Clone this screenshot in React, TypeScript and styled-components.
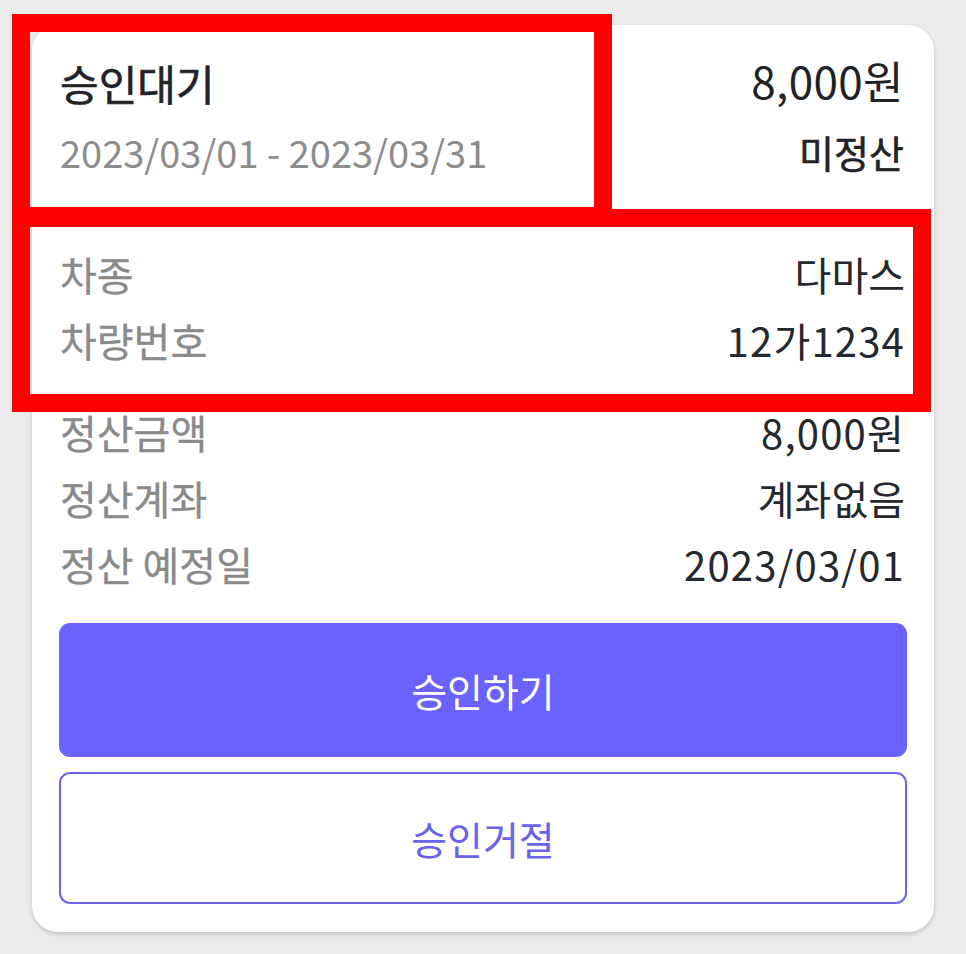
import React from 'react';
import styled, { createGlobalStyle } from 'styled-components';

const GlobalStyle = createGlobalStyle`
  html, body {
    margin: 0;
    padding: 0;
    background: #ebebeb;
  }
  body {
    font-family: "Noto Sans CJK KR", "Noto Sans", sans-serif;
  }
`;

const Page = styled.div`
  position: relative;
  width: 966px;
  height: 954px;
  padding: 25px 0 0 32px;
  box-sizing: border-box;
`;

const Card = styled.div`
  width: 902px;
  height: 907px;
  box-sizing: border-box;
  padding: 28px 27px 28px;
  background: #ffffff;
  border-radius: 26px;
  box-shadow: 0 2px 4px rgba(0, 0, 0, 0.18);
  display: flex;
  flex-direction: column;
`;

const Header = styled.div`
  display: flex;
  justify-content: space-between;
  align-items: flex-start;
  padding: 0 3px 0 1px;
`;

const HeaderCol = styled.div<{ $align: 'left' | 'right' }>`
  display: flex;
  flex-direction: column;
  align-items: ${p => (p.$align === 'right' ? 'flex-end' : 'flex-start')};
`;

const Status = styled.div`
  font-size: 42px;
  line-height: 60px;
  font-weight: 400;
  -webkit-text-stroke: 0.6px currentColor;
  color: #1f2226;
`;

const Period = styled.div`
  font-size: 38px;
  line-height: 77px;
  color: #8c8c8c;
`;

const Amount = styled.div`
  font-size: 44px;
  line-height: 54px;
  letter-spacing: 0.4px;
  color: #1f2226;
`;

const Settle = styled.div`
  font-size: 38px;
  line-height: 89px;
  font-weight: 400;
  -webkit-text-stroke: 0.6px currentColor;
  color: #1f2226;
`;

const Group = styled.div<{ $top: number }>`
  display: flex;
  flex-direction: column;
  margin-top: ${p => p.$top}px;
  padding: 0 2px 0 1px;
`;

const Row = styled.div`
  display: flex;
  justify-content: space-between;
  height: 66px;
  font-size: 40px;
  line-height: 66px;
`;

const Label = styled.span`
  color: #8a8a8a;
  -webkit-text-stroke: 0.3px currentColor;
`;

const Value = styled.span<{ $numeric?: boolean }>`
  color: #25282c;
  letter-spacing: ${p => (p.$numeric ? '1.2px' : '0')};
`;

const Actions = styled.div`
  margin-top: 26px;
  display: flex;
  flex-direction: column;
  gap: 15px;
`;

const ActionButton = styled.button<{ $primary?: boolean }>`
  height: ${p => (p.$primary ? 134 : 132)}px;
  width: 100%;
  border-radius: 11px;
  border: ${p => (p.$primary ? 'none' : '2px solid #6c64e6')};
  background: ${p => (p.$primary ? '#6a62fe' : '#ffffff')};
  color: ${p => (p.$primary ? '#ffffff' : '#6a62e8')};
  font-family: "Noto Sans CJK KR", "Noto Sans", sans-serif;
  font-size: 39px;
  cursor: pointer;
`;

const Highlight = styled.div<{ $x: number; $y: number; $w: number; $h: number }>`
  position: absolute;
  left: ${p => p.$x}px;
  top: ${p => p.$y}px;
  width: ${p => p.$w}px;
  height: ${p => p.$h}px;
  box-sizing: border-box;
  border: 18px solid #ff0000;
  pointer-events: none;
`;

const rowsVehicle = [
  { label: '차종', value: '다마스' },
  { label: '차량번호', value: '12가1234', numeric: true },
];

const rowsSettle = [
  { label: '정산금액', value: '8,000원', numeric: true },
  { label: '정산계좌', value: '계좌없음' },
  { label: '정산 예정일', value: '2023/03/01', numeric: true },
];

type RowData = { label: string; value: string; numeric?: boolean };

const InfoGroup = ({ rows, top }: { rows: RowData[]; top: number }) => (
  <Group $top={top}>
    {rows.map(r => (
      <Row key={r.label}>
        <Label>{r.label}</Label>
        <Value $numeric={r.numeric}>{r.value}</Value>
      </Row>
    ))}
  </Group>
);

export default function App() {
  return (
    <>
      <GlobalStyle />
      <Page>
        <Card>
          <Header>
            <HeaderCol $align="left">
              <Status>승인대기</Status>
              <Period>2023/03/01 - 2023/03/31</Period>
            </HeaderCol>
            <HeaderCol $align="right">
              <Amount>8,000원</Amount>
              <Settle>미정산</Settle>
            </HeaderCol>
          </Header>
          <InfoGroup rows={rowsVehicle} top={45} />
          <InfoGroup rows={rowsSettle} top={26} />
          <Actions>
            <ActionButton $primary>승인하기</ActionButton>
            <ActionButton>승인거절</ActionButton>
          </Actions>
        </Card>
        <Highlight $x={12} $y={14} $w={600} $h={211} />
        <Highlight $x={12} $y={209} $w={919} $h={203} />
      </Page>
    </>
  );
}
